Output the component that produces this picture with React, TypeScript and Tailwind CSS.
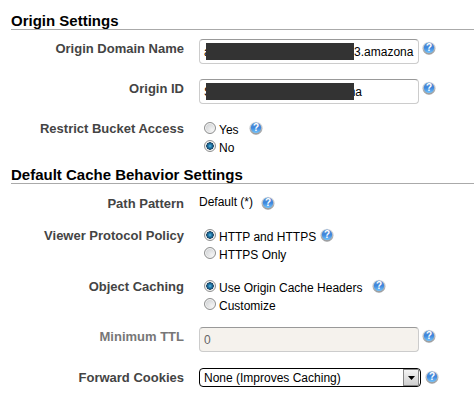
import { useState } from 'react';
import type { ReactNode } from 'react';
import clsx from 'clsx';

function HelpButton({ topic, className }: { topic: string; className?: string }) {
  return (
    <button type="button" aria-label={`Help: ${topic}`} className={clsx('block size-[14px] shrink-0', className)}>
      <svg viewBox="0 0 14 14" className="block size-[14px]" aria-hidden="true">
        <defs>
          <linearGradient id="help-ring" x1="0" y1="0" x2="0" y2="1">
            <stop offset="0" stopColor="#dfe2e5" />
            <stop offset="1" stopColor="#98999b" />
          </linearGradient>
          <linearGradient id="help-fill" x1="0" y1="0" x2="0" y2="1">
            <stop offset="0" stopColor="#5a90d4" />
            <stop offset="0.5" stopColor="#3d86dc" />
            <stop offset="1" stopColor="#74c4fc" />
          </linearGradient>
        </defs>
        <circle cx="7" cy="7.2" r="6.5" fill="url(#help-ring)" />
        <circle cx="7" cy="6.8" r="5.2" fill="url(#help-fill)" />
        <text x="7" y="10.3" textAnchor="middle" fontFamily="Liberation Sans, sans-serif" fontWeight="bold" fontSize="10" fill="#fff">
          ?
        </text>
      </svg>
    </button>
  );
}

function SectionTitle({ children }: { children: ReactNode }) {
  return <h2 className="border-b border-[#aaaaaa] text-[15px] leading-[16px] font-bold text-black">{children}</h2>;
}

type RowProps = {
  label: string;
  htmlFor?: string;
  muted?: boolean;
  className?: string;
  children: ReactNode;
};

function Row({ label, htmlFor, muted, className, children }: RowProps) {
  const labelClass = clsx(
    'w-[173px] shrink-0 pt-[2px] text-right text-[13px] font-bold',
    muted ? 'text-[#777777]' : 'text-[#444444]',
  );
  return (
    <div className={clsx('flex items-start gap-[15px]', className)}>
      {htmlFor ? (
        <label htmlFor={htmlFor} className={labelClass}>
          {label}
        </label>
      ) : (
        <div className={labelClass}>{label}</div>
      )}
      {children}
    </div>
  );
}

const inputClass =
  'block h-[25px] w-[220px] rounded-[4px] border border-[#cccccc] border-t-[#999999] px-1 outline-none';

function RedactedInput({ id, start, end, gap }: { id: string; start: string; end: string; gap: number }) {
  const [value, setValue] = useState(start + '\u00a0'.repeat(gap) + end);
  return (
    <div className="relative">
      <input
        id={id}
        type="text"
        value={value}
        onChange={(e) => setValue(e.target.value)}
        className={clsx(inputClass, 'bg-white text-black')}
      />
      <span className="absolute top-1 left-[7px] h-[17px] w-[148px] bg-[#333333]" />
    </div>
  );
}

type RadioGroupProps = {
  name: string;
  options: string[];
  initial: string;
  helpClass: string;
};

function RadioGroup({ name, options, initial, helpClass }: RadioGroupProps) {
  const [selected, setSelected] = useState(initial);
  return (
    <div role="radiogroup" aria-label={name} className="pl-[5px]">
      {options.map((option, i) => (
        <div key={option} className="flex h-[18px] items-start">
          <label className="flex items-start gap-[3px] text-black">
            <input
              type="radio"
              name={name}
              checked={selected === option}
              onChange={() => setSelected(option)}
              className="mt-[3px] size-3 appearance-none rounded-full border border-[#8e8f8f] bg-[radial-gradient(circle_at_70%_70%,#f4f4f4_0%,#d2d4d6_75%)] shadow-[inset_0_0_0_1px_#f4f4f4] checked:bg-[radial-gradient(circle,#7fd0f2_0px,#2f8fc0_1px,#17557f_3px,#123a57_3.5px,#f4f4f4_4px)]"
            />
            <span className="pt-[3px]">{option}</span>
          </label>
          {i === 0 && <HelpButton topic={name} className={clsx('mt-[2px]', helpClass)} />}
        </div>
      ))}
    </div>
  );
}

export default function App() {
  const [cookies, setCookies] = useState('none');

  return (
    <main className="min-h-screen bg-white pt-[13px] pl-[11px] font-['Liberation_Sans',Arial,sans-serif] text-[12px] leading-[16px]">
      <form>
        <SectionTitle>Origin Settings</SectionTitle>
        <div className="flex flex-col gap-[15px] pt-[9px] pb-[12px]">
          <Row label="Origin Domain Name" htmlFor="origin-domain">
            <div className="flex items-start gap-[3px]">
              <RedactedInput id="origin-domain" start="a" end="3.amazona" gap={43} />
              <HelpButton topic="Origin Domain Name" className="mt-[2px]" />
            </div>
          </Row>
          <Row label="Origin ID" htmlFor="origin-id">
            <div className="flex items-start gap-[3px]">
              <RedactedInput id="origin-id" start="S" end="na" gap={41} />
              <HelpButton topic="Origin ID" className="mt-[2px]" />
            </div>
          </Row>
          <Row label="Restrict Bucket Access">
            <RadioGroup name="Restrict Bucket Access" options={['Yes', 'No']} initial="No" helpClass="ml-[10px]" />
          </Row>
        </div>

        <SectionTitle>Default Cache Behavior Settings</SectionTitle>
        <div className="flex flex-col gap-[14px] pt-[10px]">
          <Row label="Path Pattern">
            <div className="flex items-start gap-2 text-black">
              <span>Default (*)</span>
              <HelpButton topic="Path Pattern" className="mt-[2px]" />
            </div>
          </Row>
          <Row label="Viewer Protocol Policy">
            <RadioGroup
              name="Viewer Protocol Policy"
              options={['HTTP and HTTPS', 'HTTPS Only']}
              initial="HTTP and HTTPS"
              helpClass="ml-1"
            />
          </Row>
          <Row label="Object Caching" className="pt-px">
            <RadioGroup
              name="Object Caching"
              options={['Use Origin Cache Headers', 'Customize']}
              initial="Use Origin Cache Headers"
              helpClass="ml-[10px]"
            />
          </Row>
          <Row label="Minimum TTL" htmlFor="min-ttl" muted>
            <div className="flex items-start gap-[3px]">
              <input id="min-ttl" type="text" defaultValue="0" disabled className={clsx(inputClass, 'bg-[#f5f2ed] text-[#666666]')} />
              <HelpButton topic="Minimum TTL" className="mt-[2px]" />
            </div>
          </Row>
          <Row label="Forward Cookies" htmlFor="cookies" className="pt-[2px]">
            <div className="flex items-start gap-1">
              <div className="relative">
                <select
                  id="cookies"
                  value={cookies}
                  onChange={(e) => setCookies(e.target.value)}
                  className="block h-[19px] w-[222px] appearance-none rounded-[4px] border border-black bg-white pl-1 text-black outline-none"
                >
                  <option value="none">None (Improves Caching)</option>
                </select>
                <span className="pointer-events-none absolute top-px right-[2px] flex h-[17px] w-4 items-center justify-center border border-[#888888] bg-linear-to-b from-[#f4f4f4] to-[#cfcfcf]">
                  <svg viewBox="0 0 7 4" className="h-1 w-[7px]" aria-hidden="true">
                    <path d="M0 0h7L3.5 4z" fill="#000" />
                  </svg>
                </span>
              </div>
              <HelpButton topic="Forward Cookies" className="mt-[2px]" />
            </div>
          </Row>
        </div>
      </form>
    </main>
  );
}
